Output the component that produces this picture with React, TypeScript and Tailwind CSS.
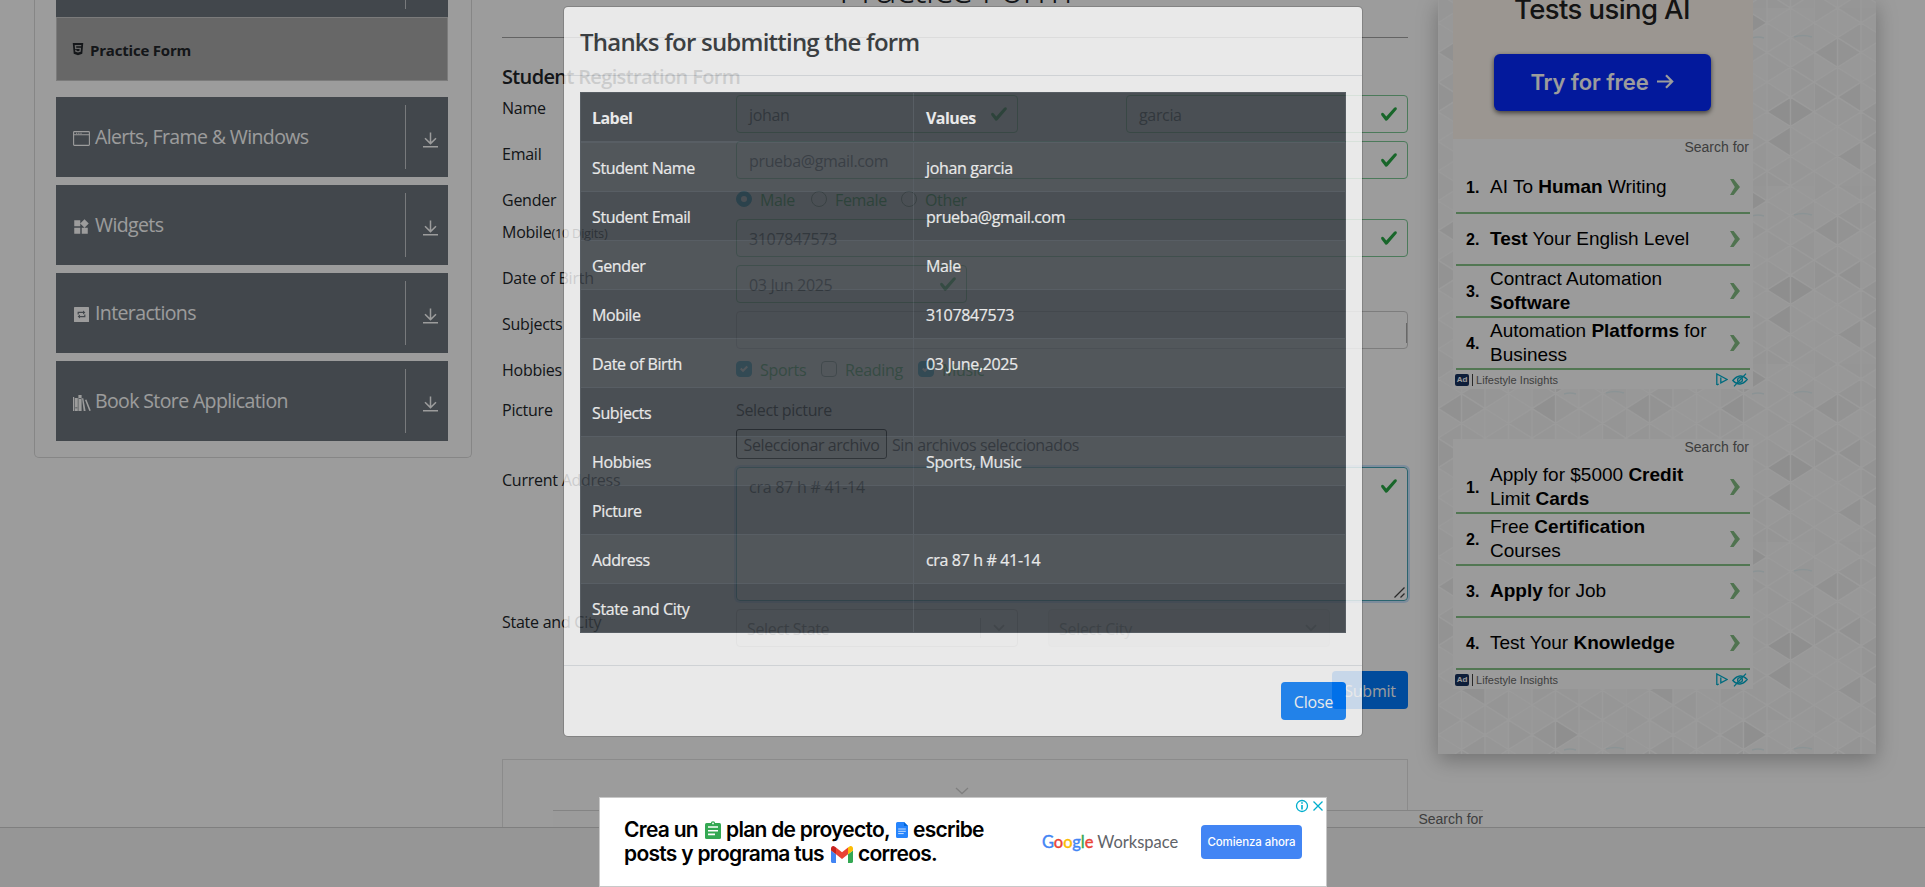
import React from "react";
import { FaHtml5 } from "react-icons/fa";
import { MdWidgets } from "react-icons/md";

const VALID = "border-[#7bc793]";

function Check({ className = "" }: { className?: string }) {
  return (
    <svg viewBox="0 0 8 8" className={`size-[18px] shrink-0 ${className}`} fill="#28a745">
      <path d="M2.3 6.73L.6 4.53c-.4-1.04.46-1.4 1.1-.8l1.1 1.4 3.4-3.8c.6-.63 1.6-.27 1.2.7l-4 4.6c-.43.5-.8.4-1.1.1z" />
    </svg>
  );
}

function WindowIcon() {
  return (
    <svg viewBox="0 0 17 15" className="h-[15px] w-[17px]" fill="none" stroke="currentColor" strokeWidth="1.1">
      <rect x="0.6" y="0.6" width="15.8" height="13.8" rx="0.8" />
      <path d="M0.6 3.8h15.8M3 2.2h1.2M5.2 2.2h1.2M7.4 2.2h1.2" />
    </svg>
  );
}

function RepeatIcon() {
  return (
    <svg viewBox="0 0 15 15" className="mx-px size-[15px]">
      <rect width="15" height="15" rx="0.6" fill="currentColor" />
      <g fill="none" stroke="#6c757d" strokeWidth="1.2">
        <path d="M4.2 7.4V5.4h5.6M10.800 7.600v2H5.200" />
      </g>
      <path d="M9 3.400L11.400 5.400 9 7.400zM6 7.600L3.600 9.600 6 11.600z" fill="#6c757d" />
    </svg>
  );
}

function BooksIcon() {
  return (
    <svg viewBox="0 0 18 16" className="h-[16px] w-[18px]" fill="currentColor">
      <path d="M0 2h1.2v14H0zM1.8 3h3v13h-3z" />
      <path d="M5.4 0h3.2v16H5.4z" />
      <path d="M2.2 12.4h2.2v.8H2.2zM5.8 3h2.4v.8H5.8z" fill="#6c757d" />
      <path d="M9 3.2h1.3L12.6 16h-1.9zM12 5l1.4-.5L17.8 15.5l-1.5.5z" />
    </svg>
  );
}

function DownIcon() {
  return (
    <svg viewBox="0 0 15 16" className="h-[16px] w-[15px]" fill="none" stroke="currentColor" strokeWidth="1.5">
      <path d="M7.5 0.4v11M2 6.2l5.500 5.400L13 6.200M0 14.800h15" />
    </svg>
  );
}

function MenuHeader({ icon, children, className = "" }: { icon: React.ReactNode; children: React.ReactNode; className?: string }) {
  return (
    <div className={`flex h-20 shrink-0 bg-[#6c757d] text-white ${className}`}>
      <div className="flex flex-1 items-center pl-[17px] text-[19.5px]">
        <span className="mt-[3px] flex w-[22px]">{icon}</span>
        <span className="whitespace-nowrap tracking-[-0.62px]">{children}</span>
      </div>
      <div className="my-2 flex w-[43px] items-center border-l border-[#c4c8cb] pl-[17px] pt-[5px]">
        <DownIcon />
      </div>
    </div>
  );
}

function Sidebar() {
  return (
    <aside className="flex h-[458px] w-[438px] shrink-0 flex-col rounded-b-[5px] border border-t-0 border-[#dcdcdc] pl-[21px] pr-[23px]">
      <div className="-mt-[63px]" />
      <MenuHeader icon={null}>{""}</MenuHeader>
      <div className="mb-4 flex h-16 shrink-0 items-center border border-[#dfe0e1]/60 bg-[#a9a9a9] pl-[14px] text-[15px] font-bold text-[#212529]">
        <FaHtml5 className="mr-[5px] size-[14px]" />
        <span className="pt-px tracking-[-0.2px]">Practice Form</span>
      </div>
      <div className="flex flex-col gap-2">
        <MenuHeader icon={<WindowIcon />}>Alerts, Frame &amp; Windows</MenuHeader>
        <MenuHeader icon={<MdWidgets className="-ml-px size-[18px]" />}>Widgets</MenuHeader>
        <MenuHeader icon={<RepeatIcon />}>Interactions</MenuHeader>
        <MenuHeader icon={<BooksIcon />}>Book Store Application</MenuHeader>
      </div>
    </aside>
  );
}

function Field({ value, className = "", check = true }: { value?: string; className?: string; check?: boolean }) {
  return (
    <div className={`flex h-[38px] items-center justify-between rounded border pl-3 pr-[9px] text-[#495057] ${className}`}>
      <span className="pt-[2px] tracking-[-0.35px]">{value}</span>
      {check && <Check />}
    </div>
  );
}

function Row({ label, children, className = "mb-2" }: { label: React.ReactNode; children: React.ReactNode; className?: string }) {
  return (
    <div className={`flex ${className}`}>
      <div className="-mb-px w-[234px] shrink-0 pt-px tracking-[-0.25px]">{label}</div>
      <div className="flex w-[672px]">{children}</div>
    </div>
  );
}

function Radio({ on, children, className }: { on?: boolean; children: string; className: string }) {
  return (
    <div className={`flex h-6 items-center gap-2 text-[#28a745] ${className}`}>
      <span className={`flex size-4 items-center justify-center rounded-full border ${on ? "border-[#1a9fc4] bg-[#1a9fc4]" : "border-[#7f9a8a]"}`}>
        {on && <span className="size-[6px] rounded-full bg-white" />}
      </span>
      <span className="pt-[2px] tracking-[-0.35px]">{children}</span>
    </div>
  );
}

function Box({ on, children, className }: { on?: boolean; children: string; className: string }) {
  return (
    <div className={`flex h-6 items-center gap-2 text-[#28a745] ${className}`}>
      <span className={`flex size-4 items-center justify-center rounded border ${on ? "border-[#1a9fc4] bg-[#1a9fc4]" : "border-[#7f9a8a]"}`}>
        {on && (
          <svg viewBox="0 0 8 8" className="size-2" fill="#fff">
            <path d="M6.564.75l-3.59 3.612-1.538-1.55L0 4.26l2.974 2.99L8 2.193z" />
          </svg>
        )}
      </span>
      <span className="pt-[2px] tracking-[-0.3px]">{children}</span>
    </div>
  );
}

function Chevron() {
  return (
    <svg viewBox="0 0 12 8" className="h-[8px] w-[12px]" fill="none" stroke="#bbb" strokeWidth="1.8">
      <path d="M1 1.2l5 5 5-5" />
    </svg>
  );
}

function PracticeForm() {
  return (
    <main className="ml-[30px] w-[906px] shrink-0 text-[#212529]">
      <h1 className="-mt-[36px] h-[48px] text-center text-[40px] font-light leading-[48px] tracking-[-1.15px]">Practice Form</h1>
      <div className="mt-[25px] border-t border-[#a3a3a3]" />
      <h5 className="mt-[26px] h-[31px] pt-px text-[20px] font-semibold leading-6 tracking-[-0.65px]">Student Registration Form</h5>
      <Row label="Name">
        <Field value="johan" className={`w-[282px] ${VALID}`} />
        <Field value="garcia" className={`ml-[108px] w-[282px] ${VALID}`} />
      </Row>
      <Row label="Email">
        <Field value="prueba@gmail.com" className={`w-full ${VALID}`} />
      </Row>
      <Row label="Gender">
        <Radio on className="w-[75px]">Male</Radio>
        <Radio className="w-[90px]">Female</Radio>
        <Radio className="">Other</Radio>
      </Row>
      <Row label={<span>Mobile<span className="text-[12.8px]">(10 Digits)</span></span>}>
        <Field value="3107847573" className={`w-full ${VALID}`} />
      </Row>
      <Row label="Date of Birth">
        <Field value="03 Jun 2025" className={`w-[231px] ${VALID}`} />
      </Row>
      <Row label="Subjects">
        <div className="flex h-[38px] w-full items-center justify-end rounded border border-[#ccc]">
          <span className="mt-[6px] h-5 w-px bg-[#aaa]" />
        </div>
      </Row>
      <Row label="Hobbies" className="mb-4">
        <Box on className="w-[85px]">Sports</Box>
        <Box className="w-[97px]">Reading</Box>
        <Box on className="">Music</Box>
      </Row>
      <Row label="Picture">
        <div>
          <div className="-mb-px pt-px tracking-[-0.35px]">Select picture</div>
          <div className="mt-2 flex h-[30px] items-center">
            <span className="flex h-[30px] w-[151px] items-center justify-center whitespace-nowrap rounded-[3px] border border-black bg-[#efefef] pt-px tracking-[-0.42px] text-black">Seleccionar archivo</span>
            <span className="ml-[5px] whitespace-nowrap pt-[2px] tracking-[-0.4px]">Sin archivos seleccionados</span>
          </div>
        </div>
      </Row>
      <Row label="Current Address">
        <div className="flex h-[134px] w-full flex-col justify-between rounded border border-[#46a4b4] shadow-[0_0_0_2px_rgba(0,123,255,0.2)]">
          <div className="flex items-start justify-between pl-3 pr-[9px] pt-[7px] text-[#495057]">
            <span className="tracking-[-0.25px]">cra 87 h # 41-14</span>
            <Check className="mt-[2px]" />
          </div>
          <svg viewBox="0 0 11 11" className="mb-[2px] mr-[2px] size-[11px] self-end" stroke="#444" strokeWidth="1.3">
            <path d="M0.5 10.5l10-10M6.5 10.5l4-4" />
          </svg>
        </div>
      </Row>
      <Row label="State and City" className="mb-6">
        <div className="flex h-[38px] w-[282px] items-center rounded border border-[#ccc] pl-[10px] text-[#808080]">
          <span className="flex-1 pt-[2px] tracking-[-0.35px]">Select State</span>
          <span className="h-[20px] w-px bg-[#ccc]" />
          <span className="px-[12px]"><Chevron /></span>
        </div>
        <div className="ml-[30px] flex h-[38px] w-[282px] items-center rounded border border-[#e6e6e6] bg-[#f2f2f2] pl-[10px] text-[#999]">
          <span className="flex-1 pt-[2px] tracking-[-0.3px]">Select City</span>
          <span className="px-[12px]"><Chevron /></span>
        </div>
      </Row>
      <div className="flex justify-end">
        <span className="flex h-[38px] w-[76px] items-center justify-center rounded bg-[#007bff] pt-[2px] tracking-[-0.2px] text-white">Submit</span>
      </div>
      <div className="mt-[50px] flex h-[80px] justify-center border border-[#e4e4e4] pl-[13px] pt-[27px]">
        <svg viewBox="0 0 14 8" className="h-[8px] w-[14px]" fill="none" stroke="#d0d0d0" strokeWidth="1.3">
          <path d="M1 1l6 5.600L13 1" />
        </svg>
      </div>
    </main>
  );
}

const H = 29.667;
// Facets on the triangular lattice: base column, apex column, apex height, fill.
const FACETS: [number, number, number, string][] = [
  [7, 6, 3.5, "#e9e9e9"],
  [7, 8, 3.5, "#eaeaea"],
  [7, 6, 4.5, "#eaeaea"],
  [5, 6, 0.5, "#eaeaea"],
  [5, 4, 1.5, "#ebebeb"],
  [5, 4, 0.5, "#f0f0f0"],
  [1, 0, 1.5, "#eeeeee"],
  [1, 2, 1.5, "#f0f0f0"],
  [2, 1, 3, "#eeeeee"],
  [0, 1, 3, "#f1f1f1"],
  [2, 1, 5, "#eeeeee"],
  [3, 2, 3.5, "#f0f0f0"],
  [3, 2, 4.5, "#f0f0f0"],
  [2, 1, 1, "#f2f2f2"],
];
const TINTS = ["#f8f8f8", "#f5f5f5", "#f7f7f7", "#f4f4f4", "#f8f8f8", "#f6f6f6", "#f9f9f9"];

function Backdrop() {
  const lines: string[] = [];
  const base: { d: string; fill: string }[] = [];
  for (let k = 0; k < 8; k++) {
    const x = k * 23.5;
    lines.push(`M${x} 0V178`);
    for (let j = -1; j < 7; j++) {
      const y = (k % 2 ? j : j + 0.5) * H;
      lines.push(`M${x} ${y}l23.5 ${H / 2}M${x} ${y}l23.5 ${-H / 2}`);
      base.push({ d: `M${x} ${y}l23.5 ${H / 2}v${-H}z`, fill: TINTS[(k * 3 + j * 5 + 14) % 7] });
      base.push({ d: `M${x} ${y}v${H}l23.5 ${-H / 2}z`, fill: TINTS[(k * 2 + j * 3 + 11) % 7] });
    }
  }
  return (
    <svg className="absolute inset-0 h-full w-full">
      <defs>
        <pattern id="facets" width="188" height="178" y="8" patternUnits="userSpaceOnUse">
          <rect width="188" height="178" fill="#f8f8f8" />
          {base.map((f, i) => (
            <path key={`b${i}`} fill={f.fill} d={f.d} />
          ))}
          {FACETS.map(([b, a, h, fill], i) => (
            <path key={i} fill={fill} d={`M${b * 23.5} ${(h - 0.5) * H}v${H}L${a * 23.5} ${h * H}z`} />
          ))}
          <path d={lines.join("")} stroke="#fdfdfd" strokeWidth="1.5" fill="none" />
          <path d="M126 30q6-2 12 0M168 29q9-3 18 0" stroke="#e4f1f3" strokeWidth="1.5" fill="none" />
        </pattern>
      </defs>
      <rect width="100%" height="100%" fill="url(#facets)" />
    </svg>
  );
}

function SearchAd({ items }: { items: React.ReactNode[] }) {
  return (
    <div className="flex h-[250px] w-[300px] flex-col bg-[#fefefe] font-['Liberation_Sans',sans-serif] text-black">
      <div className="h-[23px] pr-1 text-right text-[14px] leading-[17px] text-[#666]">Search for</div>
      {items.map((t, i) => (
        <div key={i} className="ml-[3px] flex h-[52px] w-[294px] items-center border-b-2 border-[#86c388] pl-[10px]">
          <b className="w-6 pt-px text-[16px]">{i + 1}.</b>
          <span className="flex-1 whitespace-nowrap text-[19px] leading-6">{t}</span>
          <svg viewBox="0 0 10 16" className="mr-[10px] h-4 w-[10px]" fill="#83bd84">
            <path d="M0 0h3.6L10 8l-6.4 8H0l4.8-8z" />
          </svg>
        </div>
      ))}
      <div className="flex h-[19px] items-center pl-[2px] pr-[5px] text-[11px] text-[#666]">
        <span className="flex h-3 w-[14px] items-center justify-center rounded-[2px] bg-[#17325f] text-[8px] font-bold text-white">Ad</span>
        <span className="ml-[3px] h-3 w-px bg-[#444]" />
        <span className="ml-[3px] flex-1 tracking-[0.04px]">Lifestyle Insights</span>
        <svg viewBox="0 0 12 13" className="h-[13px] w-3" fill="none" stroke="#00aecd" strokeWidth="1.3">
          <path d="M0.8 12V1l10.4 5.5-6.4 3.4V4.6M0.8 12l2-1" />
        </svg>
        <svg viewBox="0 0 16 14" className="ml-1 h-[14px] w-4" fill="none" stroke="#00aecd" strokeWidth="1.3">
          <path d="M0.8 7.5Q8-1 15.2 6.5 8 15 .8 7.5zM2 13.4L14 .6" />
          <circle cx="8" cy="7" r="2.4" />
        </svg>
      </div>
    </div>
  );
}

function RightPanel() {
  return (
    <aside className="relative ml-[30px] h-[754px] w-[438px] shrink-0 shadow-[0_6px_20px_rgba(0,0,0,0.28)]">
      <Backdrop />
      <div className="relative pl-[15px]">
        <div className="flex h-[139px] w-[300px] flex-col items-center bg-[#fdf6ee] pr-[2px] font-['Inter',sans-serif]">
          <div className="-mt-[8px] h-[62px] text-[27.5px] font-medium leading-[34px] tracking-[-0.6px] text-[#222]">Tests using AI</div>
          <div className="flex h-[57px] w-[217px] items-center justify-center gap-2 rounded-md bg-[#052aff] pb-[2px] text-[22px] font-semibold tracking-[-0.1px] text-white shadow-[0_2px_5px_rgba(0,0,0,0.6)]">
            Try for free
            <svg viewBox="0 0 17 15" className="h-[15px] w-[17px]" fill="none" stroke="currentColor" strokeWidth="2.2">
              <path d="M0 7.5h15M9 1.2l6.2 6.3L9 13.8" />
            </svg>
          </div>
        </div>
        <SearchAd
          items={[
            <>AI To <b>Human</b> Writing</>,
            <><b>Test</b> Your English Level</>,
            <>Contract Automation<br /><b>Software</b></>,
            <>Automation <b>Platforms</b> for<br />Business</>,
          ]}
        />
        <div className="h-[50px]" />
        <SearchAd
          items={[
            <>Apply for $5000 <b>Credit</b><br />Limit <b>Cards</b></>,
            <>Free <b>Certification</b><br />Courses</>,
            <><b>Apply</b> for Job</>,
            <>Test Your <b>Knowledge</b></>,
          ]}
        />
      </div>
    </aside>
  );
}

const ROWS: [string, string][] = [
  ["Student Name", "johan garcia"],
  ["Student Email", "prueba@gmail.com"],
  ["Gender", "Male"],
  ["Mobile", "3107847573"],
  ["Date of Birth", "03 June,2025"],
  ["Subjects", ""],
  ["Hobbies", "Sports, Music"],
  ["Picture", ""],
  ["Address", "cra 87 h # 41-14"],
  ["State and City", ""],
];

function Modal() {
  return (
    <div className="absolute left-[563px] top-[6px] w-[800px] rounded-[5px] border border-black/20 bg-white bg-clip-padding text-[#212529] opacity-[.78]">
      <div className="h-[69px] border-b border-[#dee2e6] px-4 py-[17px] text-[24px] font-semibold leading-9 tracking-[-0.78px]">
        Thanks for submitting the form
      </div>
      <div className="p-4">
        <table className="mb-4 w-full border-collapse border border-[#6a7178] bg-[#343a40] text-white">
          <thead>
            <tr>
              <th className="w-[333px] border border-b-2 border-[#454d55] pb-[11px] pl-[11px] pr-3 pt-[13px] text-left font-bold tracking-[-0.55px]">Label</th>
              <th className="border border-b-2 border-[#454d55] px-3 pb-[11px] pt-[13px] text-left font-bold tracking-[-0.55px]">Values</th>
            </tr>
          </thead>
          <tbody>
            {ROWS.map(([a, b]) => (
              <tr key={a} className="odd:bg-white/5">
                <td className="h-[49px] border border-[#454d55] pb-0 pl-[11px] pr-3 pt-[2px] tracking-[-0.38px] [-webkit-text-stroke:0.2px_currentColor]">{a}</td>
                <td className="border border-[#454d55] px-3 pb-0 pt-[2px] tracking-[-0.35px] [-webkit-text-stroke:0.2px_currentColor]">{b}</td>
              </tr>
            ))}
          </tbody>
        </table>
      </div>
      <div className="flex justify-end border-t border-[#dee2e6] p-4">
        <span className="flex h-[38px] w-[65px] items-center justify-center rounded bg-[#007bff] pt-[2px] tracking-[-0.2px] text-white">Close</span>
      </div>
    </div>
  );
}

function WorkspaceAd() {
  return (
    <div className="absolute left-[599px] top-[797px] flex h-[90px] w-[728px] border border-[#c8c8c8] bg-white font-['Inter',sans-serif]">
      <div className="ml-[24px] mt-[20px] w-[418px] text-[21px] font-semibold leading-6 tracking-[-0.72px] text-black">
        <div className="flex items-center whitespace-nowrap">
          Crea un
          <svg viewBox="0 0 16 18" className="ml-[7px] mr-[5px] h-[18px] w-4">
            <rect y="2" width="16" height="16" rx="1.5" fill="#34a853" />
            <circle cx="8" cy="2.4" r="2.2" fill="#34a853" />
            <circle cx="8" cy="2.4" r="0.9" fill="#fff" />
            <path d="M3 6h10M3 9.7h10M3 13.4h7" stroke="#fff" strokeWidth="1.6" />
          </svg>
          plan de proyecto,
          <svg viewBox="0 0 12 16" className="ml-[6px] mr-[5px] h-4 w-3">
            <path d="M1.5 0H8l4 4v10.5a1.5 1.5 0 0 1-1.5 1.5h-9A1.5 1.5 0 0 1 0 14.500V1.500A1.500 1.500 0 0 1 1.500 0z" fill="#2684fc" />
            <path d="M8 0l4 4H8z" fill="#0066da" />
            <path d="M2.200 7h7.600M2.200 9.300h7.600M2.200 11.600h5.500" stroke="#fff" strokeWidth="1" opacity=".75" />
          </svg>
          escribe
        </div>
        <div className="flex items-center whitespace-nowrap">
          posts y programa tus
          <svg viewBox="52 42 88 66" className="ml-[7px] mr-[5px] h-[17px] w-[22px]" preserveAspectRatio="none">
            <path fill="#4285f4" d="M58 108h14V74L52 59v43c0 3.320 2.690 6 6 6" />
            <path fill="#34a853" d="M120 108h14c3.320 0 6-2.690 6-6V59l-20 15" />
            <path fill="#fbbc04" d="M120 48v26l20-15v-8c0-7.420-8.470-11.650-14.400-7.200" />
            <path fill="#ea4335" d="M72 74V48l24 18 24-18v26L96 92" />
            <path fill="#c5221f" d="M52 51v8l20 15V48l-5.600-4.200c-5.940-4.450-14.400-.220-14.400 7.200" />
          </svg>
          correos.
        </div>
      </div>
      <div className="mt-[33px] flex w-[159px] gap-1 whitespace-nowrap font-['Lato',sans-serif] text-[16.500px] leading-[22px] text-[#5f6368]">
        <span className="tracking-[-0.100px] [-webkit-text-stroke:0.400px_currentColor]">
          <span className="text-[#4285f4]">G</span><span className="text-[#ea4335]">o</span><span className="text-[#fbbc04]">o</span><span className="text-[#4285f4]">g</span><span className="text-[#34a853]">l</span><span className="text-[#ea4335]">e</span>
        </span>
        <span>Workspace</span>
      </div>
      <div className="mt-[27px] flex h-[34px] w-[101px] shrink-0 items-center justify-center whitespace-nowrap rounded bg-[#4285f4] text-[11.500px] font-medium tracking-[-0.100px] text-white">Comienza ahora</div>
      <svg viewBox="0 0 28 14" className="absolute right-[3px] top-px h-[14px] w-7" fill="none" stroke="#00aecd" strokeWidth="1.300">
        <circle cx="7" cy="7" r="5.500" />
        <path d="M7 3.200v1.500M7 6v4.600" strokeWidth="1.600" />
        <path d="M18.500 2.500l9 9M27.500 2.500l-9 9" />
      </svg>
    </div>
  );
}

export default function App() {
  return (
    <div className="relative h-[887px] w-full overflow-hidden bg-white font-['Open_Sans','Noto_Sans',sans-serif] text-[16px] leading-6">
      <div className="flex h-[827px] items-start overflow-hidden pl-[34px]">
        <Sidebar />
        <PracticeForm />
        <RightPanel />
      </div>
      <footer className="h-[60px] border-t border-[#d0d0d0] bg-[#f5f5f5]" />
      <div className="absolute left-[553px] top-[810px] h-[17px] w-[930px] border-t border-[#d8d8d8] bg-[#fefefe] text-right font-['Liberation_Sans',sans-serif] text-[14px] leading-4 text-[#666]">
        Search for
      </div>
      <div className="absolute inset-0 bg-black/39" />
      <Modal />
      <WorkspaceAd />
    </div>
  );
}
